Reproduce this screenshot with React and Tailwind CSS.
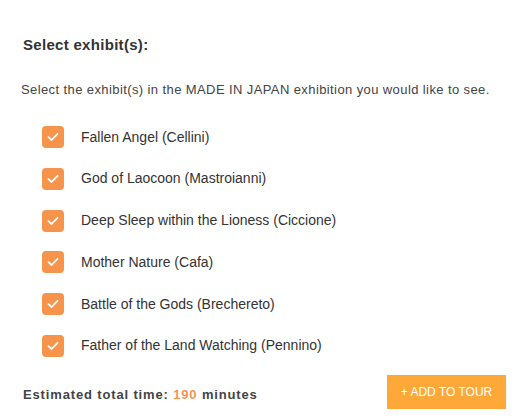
import React from 'react';

const exhibits = [
  'Fallen Angel (Cellini)',
  'God of Laocoon (Mastroianni)',
  'Deep Sleep within the Lioness (Ciccione)',
  'Mother Nature (Cafa)',
  'Battle of the Gods (Brechereto)',
  'Father of the Land Watching (Pennino)',
];

function Check() {
  return (
    <span className="w-[22px] h-[22px] rounded-[4px] bg-[#f7944b] flex items-center justify-center shrink-0">
      <svg width="12" height="10" viewBox="0 0 12 10" fill="none">
        <path d="M1.5 5.2 L4.6 8 L10.5 1.8" stroke="#fff" strokeWidth="1.8" strokeLinecap="round" strokeLinejoin="round" />
      </svg>
    </span>
  );
}

export default function App() {
  return (
    <div className="w-[521px] h-[419px] bg-white font-['Liberation_Sans',Arial,sans-serif] overflow-hidden">
      <h2 className="pt-[36px] pl-[23px] text-[15px] font-bold text-[#333] leading-[18px] tracking-[0.3px]">Select exhibit(s):</h2>
      <p className="mt-[28px] pl-[21px] text-[13px] text-[#444] tracking-[0.4px] leading-[16px]">
        Select the exhibit(s) in the MADE IN JAPAN exhibition you would like to see.
      </p>
      <ul className="mt-[28px] pl-[42px] flex flex-col gap-[19.8px]">
        {exhibits.map((e) => (
          <li key={e} className="flex items-center gap-[17px] h-[22px]">
            <Check />
            <span className="text-[14px] text-[#333]">{e}</span>
          </li>
        ))}
      </ul>
      <div className="mt-[18px] flex items-center justify-between pl-[23px] pr-[15px]">
        <p className="text-[13px] font-bold text-[#444] tracking-[0.85px] mt-[6px]">
          Estimated total time: <span className="text-[#f7944b]">190</span> minutes
        </p>
        <button className="w-[119px] h-[34px] bg-[#fea839] text-white text-[12px]">+ ADD TO TOUR</button>
      </div>
    </div>
  );
}
